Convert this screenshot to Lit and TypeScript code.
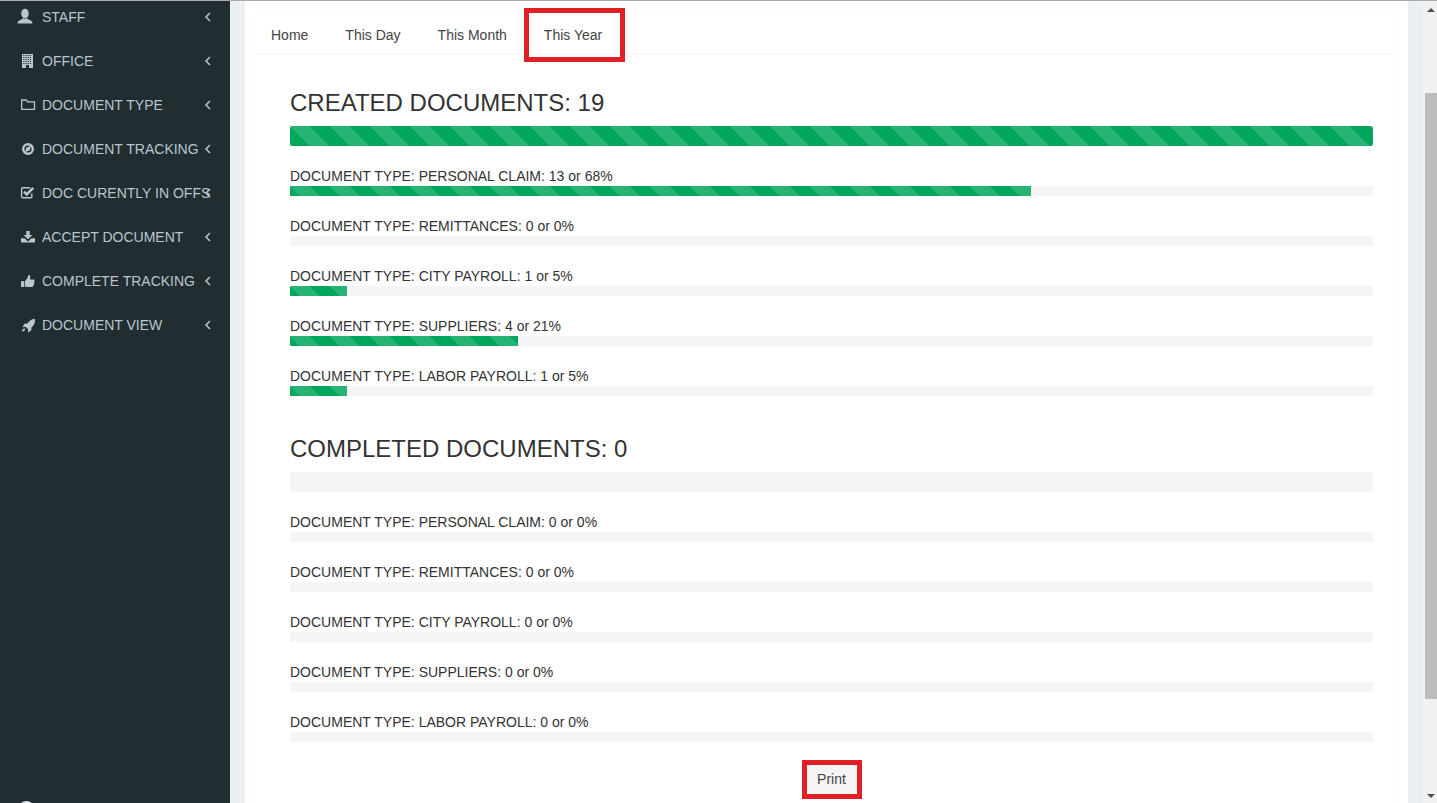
import { LitElement, html, css, svg } from "lit";
import { customElement } from "lit/decorators.js";

// office windows, cut out of the building in the sidebar colour
const windows = [5, 7, 9, 11, 13].flatMap((y) =>
  [7.2, 9.4, 11.6, 13.8].map((x) => svg`<rect class="cut" x=${x} y=${y} width="1.2" height="1" />`)
);

// icons are drawn in a 26x22 box, see .icon
const ICONS = {
  staff: svg`<ellipse cx="9" cy="7.600" rx="3.800" ry="4.800"/><path d="M1.500 17.500c0-2.500 1.600-3 3.500-3.700 1.100-.4 1.800-1 1.900-1.700.6.500 1.300.8 2.100.8s1.500-.3 2.100-.8c.1.700.8 1.300 1.900 1.700 1.900.7 3.500 1.200 3.500 3.700z"/>`,
  office: svg`<path d="M6 4h11v14H6z"/>${windows}<rect class="cut" x="10" y="15" width="3" height="3"/>`,
  folder: svg`<path fill="none" stroke="currentColor" stroke-width="1.300" d="M5.700 15.400V6h4.600l1.300 1.900h6.900v7.500z"/>`,
  compass: svg`<path fill-rule="evenodd" d="M12 5a6 6 0 1 1 0 12 6 6 0 0 1 0-12zm0 2.400a3.600 3.600 0 1 0 0 7.200 3.600 3.600 0 0 0 0-7.200z"/><path d="M15.200 7.800l-1.700 4.700-4.700 1.700 1.700-4.700z"/>`,
  check: svg`<path fill="none" stroke="currentColor" stroke-width="1.400" d="M15.800 11.500v3.300a1 1 0 0 1-1 1H6.600a1 1 0 0 1-1-1V6.800a1 1 0 0 1 1-1h7.500"/><path fill="none" stroke="currentColor" stroke-width="2.600" d="M8 9.600l2.700 2.700 6.500-6.500"/>`,
  download: svg`<path d="M10.300 5h3.400v4h2.800L12 13.300 7.500 9h2.800z"/><path d="M5 12.200h3.500L12 15.400l3.500-3.200H19v4.300H5z"/>`,
  thumb: svg`<path d="M5 11.200h3.300v5.800H5z"/><path d="M9 11c1.700-1.500 3-3.200 3.200-6 1.900-.3 2.600 1.700 1.800 4.400h3.500c1.400 0 1.400 1.800.5 2.100.8.600.6 1.800-.2 2.100.4.800.1 1.700-.6 1.900.1 1-.5 1.600-1.500 1.600h-4c-1 0-1.700-.5-2.700-.6z"/>`,
  rocket: svg`<path d="M19 5c.3 3.600-.9 6.300-3.500 8.600l-.3 3-3.400 1.900.4-3-2.700-2.700-3 .4 1.900-3.400 3-.3C13.700 6.900 15.400 4.800 19 5z"/><path d="M8.300 14.200l1 1c-.4 1.300-1.600 2-3.400 2.300.3-1.700 1-2.900 2.400-3.300z"/>`,
};

const MENU: [keyof typeof ICONS, string][] = [
  ["staff", "STAFF"],
  ["office", "OFFICE"],
  ["folder", "DOCUMENT TYPE"],
  ["compass", "DOCUMENT TRACKING"],
  ["check", "DOC CURENTLY IN OFFS"],
  ["download", "ACCEPT DOCUMENT"],
  ["thumb", "COMPLETE TRACKING"],
  ["rocket", "DOCUMENT VIEW"],
];

const TYPES = ["PERSONAL CLAIM", "REMITTANCES", "CITY PAYROLL", "SUPPLIERS", "LABOR PAYROLL"];

@customElement("app-root")
export class AppRoot extends LitElement {
  static styles = css`
    :host {
      display: flex;
      flex-direction: column;
      height: 803px;
      overflow: hidden;
      font-family: "Liberation Sans", Arial, sans-serif;
      font-size: 14px;
      color: #333;
      background: #ecf0f5;
    }
    .topline { height: 1px; flex: none; background: #aaa; }
    .page { display: flex; flex: 1; min-height: 0; }

    .sidebar {
      width: 230px;
      flex: none;
      display: flex;
      flex-direction: column;
      background: #222d32;
      color: #b8c7ce;
      overflow: hidden;
    }
    .menu { margin: -6px 0 0; padding: 0; list-style: none; }
    .menu li {
      position: relative;
      display: flex;
      align-items: center;
      height: 44px;
      padding-left: 16px;
      white-space: nowrap;
    }
    .icon { width: 26px; height: 22px; flex: none; fill: currentColor; }
    .icon .cut { fill: #222d32; }
    .label { width: 168px; overflow: hidden; }
    .angle {
      position: absolute;
      left: 204px;
      top: 17px;
      width: 8px;
      height: 10px;
      fill: none;
      stroke: currentColor;
      stroke-width: 1.5;
    }
    .avatar { margin-top: auto; height: 2px; padding-left: 18px; overflow: hidden; }
    .avatar div { width: 17px; height: 17px; border-radius: 50%; background: #dfe8f2; }

    .main { flex: 1; min-width: 0; padding: 0 15px; }
    .card { height: 100%; padding: 13px 10px 0; background: #fff; box-sizing: border-box; }
    .box { height: 100%; border: 1px solid #fcfcfc; border-bottom: 0; }
    .tabs {
      display: flex;
      gap: 7px;
      height: 40px;
      box-sizing: border-box;
      border-bottom: 1px solid #f4f4f4;
    }
    .tab { position: relative; padding: 10px 15px; line-height: 20px; color: #444; }
    .marked::after {
      content: "";
      position: absolute;
      inset: -7px -8px -8px -5px;
      border: 5px solid #e01f26;
    }
    .content { padding: 35px 24px 0 34px; }
    h3 {
      margin: 0 0 10px;
      font-size: 24px;
      font-weight: 400;
      line-height: 26px;
      color: #333;
    }
    h3.second { margin-top: 40px; }
    .row { height: 30px; margin-bottom: 20px; }
    .row-label { line-height: 20px; height: 20px; white-space: nowrap; }
    .progress {
      height: 10px;
      background: #f5f5f5;
      border-radius: 1px;
      overflow: hidden;
    }
    .progress.big { height: 20px; margin-bottom: 20px; border-radius: 2px; }
    .fill {
      height: 100%;
      background-color: #00a65a;
      background-image: linear-gradient(
        45deg,
        rgba(255, 255, 255, 0.15) 25%,
        transparent 25%,
        transparent 50%,
        rgba(255, 255, 255, 0.15) 50%,
        rgba(255, 255, 255, 0.15) 75%,
        transparent 75%,
        transparent
      );
      background-size: 40px 40px;
    }
    .actions { display: flex; justify-content: center; }
    .print {
      position: relative;
      height: 34px;
      padding: 6px 12px;
      border: 1px solid #ddd;
      border-radius: 3px;
      background: #f4f4f4;
      color: #444;
      font: inherit;
      line-height: 20px;
      box-sizing: border-box;
    }
    .print::after {
      content: "";
      position: absolute;
      inset: -3px -4px -4px -3px;
      border: 5px solid #e01f26;
    }

    .scrollbar {
      width: 12px;
      flex: none;
      padding-left: 2px;
      display: flex;
      flex-direction: column;
      background: #f1f1f1;
    }
    .btn { height: 17px; flex: none; display: flex; align-items: center; justify-content: center; }
    .btn.down { height: 15px; margin-top: auto; }
    .up-arrow, .down-arrow {
      width: 0;
      height: 0;
      border-left: 4px solid transparent;
      border-right: 4px solid transparent;
    }
    .up-arrow { border-bottom: 4px solid #505050; }
    .down-arrow { border-top: 4px solid #505050; }
    .thumb { height: 606px; margin-top: 75px; background: #bcbcbc; }
  `;

  renderRow(name: string, count: number, total: number) {
    const pct = total ? (count / total) * 100 : 0;
    return html`
      <div class="row">
        <div class="row-label">DOCUMENT TYPE: ${name}: ${count} or ${Math.round(pct)}%</div>
        <div class="progress"><div class="fill" style="width: ${pct}%"></div></div>
      </div>
    `;
  }

  renderSection(title: string, counts: number[], second = false) {
    const total = counts.reduce((a, b) => a + b, 0);
    return html`
      <h3 class=${second ? "second" : ""}>${title}: ${total}</h3>
      <div class="progress big">
        <div class="fill" style="width: ${total ? 100 : 0}%"></div>
      </div>
      ${TYPES.map((t, i) => this.renderRow(t, counts[i], total))}
    `;
  }

  render() {
    return html`
      <div class="topline"></div>
      <div class="page">
        <aside class="sidebar">
          <ul class="menu">
            ${MENU.map(
              ([icon, text]) => html`
                <li>
                  <svg class="icon" viewBox="0 0 26 22">${ICONS[icon]}</svg>
                  <span class="label">${text}</span>
                  <svg class="angle" viewBox="0 0 8 10"><path d="M6 1L2 5l4 4" /></svg>
                </li>
              `
            )}
          </ul>
          <div class="avatar"><div></div></div>
        </aside>
        <main class="main">
          <div class="card">
            <div class="box">
              <nav class="tabs">
                <span class="tab">Home</span>
                <span class="tab">This Day</span>
                <span class="tab">This Month</span>
                <span class="tab marked">This Year</span>
              </nav>
              <div class="content">
                ${this.renderSection("CREATED DOCUMENTS", [13, 0, 1, 4, 1])}
                ${this.renderSection("COMPLETED DOCUMENTS", [0, 0, 0, 0, 0], true)}
                <div class="actions"><button class="print">Print</button></div>
              </div>
            </div>
          </div>
        </main>
        <div class="scrollbar">
          <div class="btn"><div class="up-arrow"></div></div>
          <div class="thumb"></div>
          <div class="btn down"><div class="down-arrow"></div></div>
        </div>
      </div>
    `;
  }
}
